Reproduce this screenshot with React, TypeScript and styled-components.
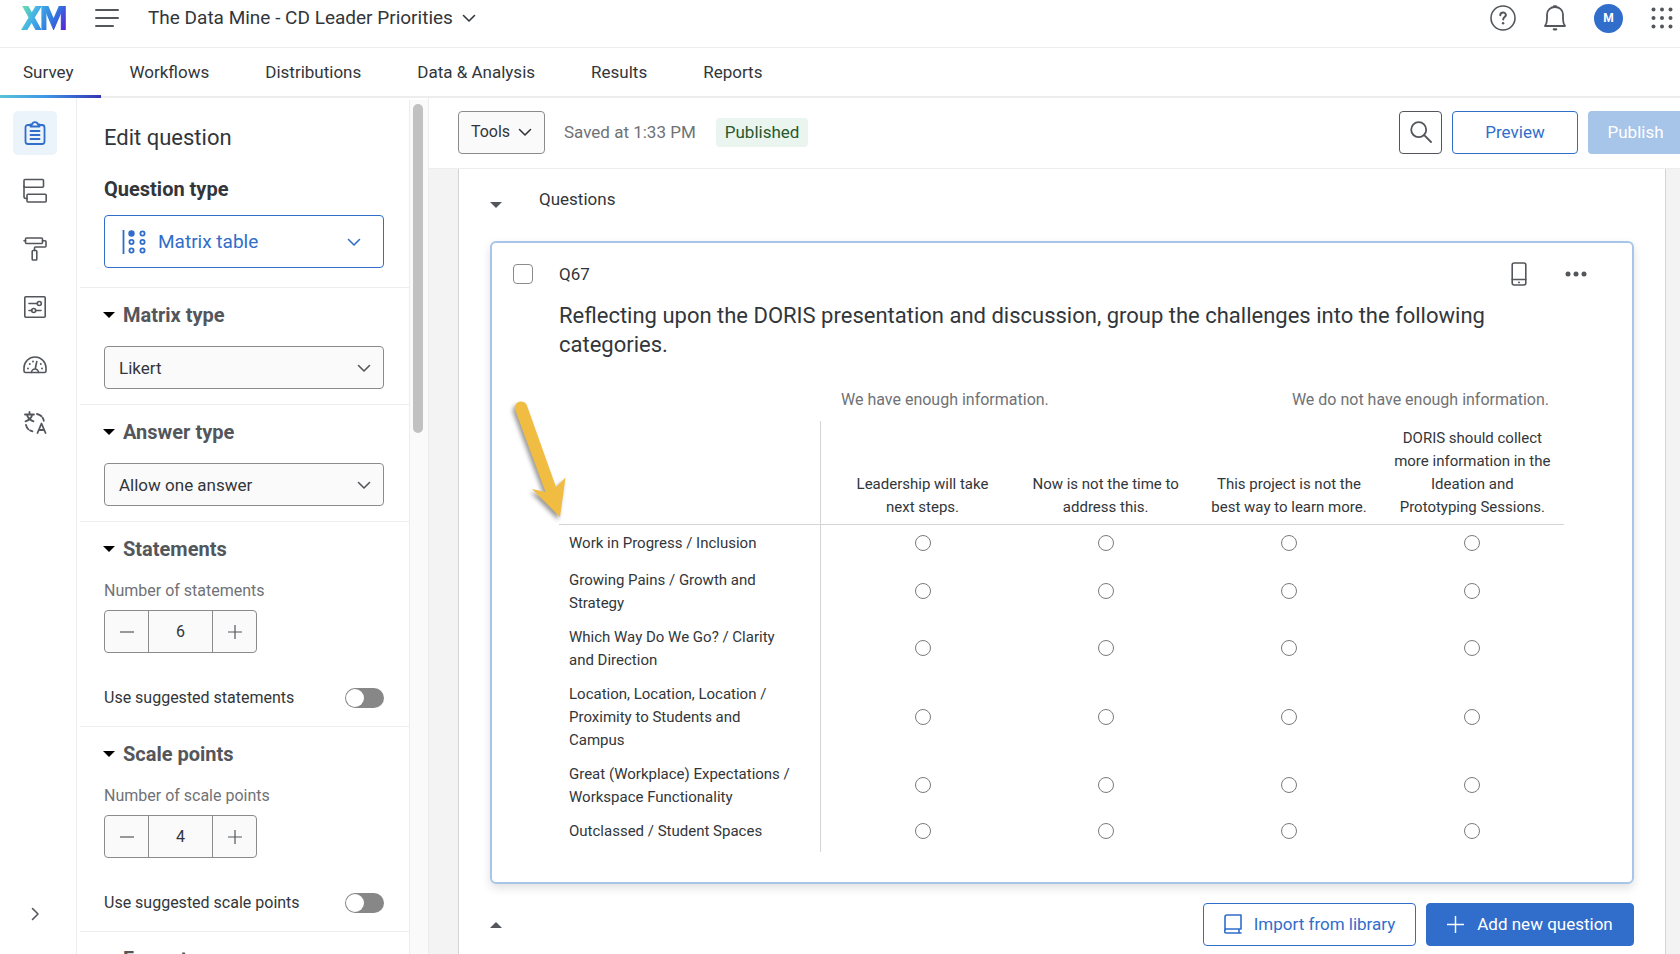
import React, { useId } from "react";
import styled, { createGlobalStyle, css } from "styled-components";

const c = {
  ink: "#32363a",
  icon: "#53565b",
  muted: "#6f7276",
  blue: "#316dca",
  blueSoft: "#a7c4e9",
  line: "#ededee",
  rule: "#d3d4d5",
  field: "#8a8b8c",
};

const GlobalStyle = createGlobalStyle`
  *, *::before, *::after { box-sizing: border-box; }
  html, body, #root { height: 100%; }
  body {
    margin: 0;
    overflow: hidden;
    background: #fff;
    color: ${c.ink};
    font: 16px/24px Roboto, "Liberation Sans", sans-serif;
  }
  button, input, select { font: inherit; color: inherit; }
  svg { display: block; flex: none; }
`;

const Page = styled.div`
  display: flex;
  flex-direction: column;
  height: 100vh;
`;

const TopBar = styled.header`
  display: flex;
  align-items: center;
  flex: none;
  height: 48px;
  padding: 0 7px 11px 21px;
  border-bottom: 1px solid ${c.line};
`;

const PlainButton = styled.button`
  display: flex;
  align-items: center;
  justify-content: center;
  padding: 0;
  border: 0;
  background: none;
  color: ${c.icon};
  cursor: pointer;
`;

const MenuButton = styled(PlainButton)`
  margin: 0 29px 0 28px;
`;

const ProjectButton = styled(PlainButton)`
  gap: 9px;
  font-size: 19px;
  color: ${c.ink};
`;

const TopActions = styled.div`
  display: flex;
  align-items: center;
  gap: 28px;
  margin-left: auto;
`;

const Avatar = styled.button`
  width: 29px;
  height: 29px;
  padding: 0;
  border: 0;
  border-radius: 50%;
  background: ${c.blue};
  color: #fff;
  font-size: 12px;
  font-weight: 700;
`;

const Tabs = styled.nav`
  display: flex;
  flex: none;
  height: 50px;
  border-bottom: 2px solid ${c.line};
`;

const Tab = styled.a<{ $active?: boolean }>`
  display: flex;
  align-items: center;
  height: 50px;
  padding: 0 28px 2px;
  color: ${c.ink};
  font-size: 17px;
  text-decoration: none;
  &:first-child { padding-left: 23px; }
  ${(p) =>
    p.$active &&
    css`
      background: linear-gradient(90deg, #57c3d6, #3f97e6 45%, #3434b4) bottom / 100% 3px no-repeat;
    `}
`;

const Body = styled.div`
  display: flex;
  flex: 1;
  min-height: 0;
`;

const Rail = styled.nav`
  display: flex;
  flex-direction: column;
  align-items: center;
  gap: 14px;
  flex: none;
  width: 77px;
  padding: 13px 6px 18px 0;
  border-right: 1px solid ${c.line};
`;

const RailButton = styled(PlainButton)<{ $active?: boolean }>`
  width: 44px;
  height: 44px;
  border-radius: 5px;
  ${(p) => p.$active && css`background: #ebf3fb; color: ${c.blue};`}
  &:last-child { margin-top: auto; }
`;

const PanelWrap = styled.div`
  display: flex;
  flex: none;
  width: 352px;
  border-right: 1px solid ${c.line};
`;

const Panel = styled.aside`
  flex: 1;
  overflow: hidden;
  padding-left: 3px;
`;

const ScrollTrack = styled.div`
  width: 19px;
  margin-top: 2px;
  padding: 4px 4px 0 3px;
  border-left: 1px solid ${c.line};
  background: #fafafa;
`;

const ScrollThumb = styled.div`
  width: 10px;
  height: 329px;
  border-radius: 5px;
  background: #c1c1c1;
`;

const Section = styled.section`
  padding: 15px 25px 15px 24px;
  border-bottom: 1px solid ${c.line};
`;

const IntroSection = styled(Section)`
  padding: 24px 25px 19px 24px;
`;

const PanelTitle = styled.h1`
  margin: 0;
  font-size: 22px;
  font-weight: 400;
  line-height: 32px;
`;

const FieldTitle = styled.h2`
  margin: 22px 0 13px;
  font-size: 20px;
  font-weight: 700;
  line-height: 26px;
`;

const TypeButton = styled.button`
  display: flex;
  align-items: center;
  gap: 12px;
  width: 100%;
  height: 53px;
  padding: 0 22px 0 17px;
  border: 1px solid ${c.blue};
  border-radius: 4px;
  background: #fff;
  color: ${c.blue};
  font-size: 19px;
  svg:last-child { margin-left: auto; }
`;

const SectionToggle = styled.button`
  display: flex;
  align-items: center;
  gap: 8px;
  padding: 0;
  border: 0;
  background: none;
  color: #53565b;
  font-size: 20px;
  font-weight: 700;
  line-height: 24px;
`;

const SectionHeading = styled.h3`
  margin: 0 0 19px -1px;
`;

const SelectBox = styled.div`
  display: grid;
  align-items: center;
  > * { grid-area: 1 / 1; }
  svg { justify-self: end; margin-right: 13px; pointer-events: none; color: ${c.icon}; }
`;

const Select = styled.select`
  appearance: none;
  width: 100%;
  height: 43px;
  padding: 0 40px 0 14px;
  border: 1px solid ${c.field};
  border-radius: 4px;
  background: #fafafa;
  font-size: 17px;
`;

const FieldLabel = styled.label`
  display: block;
  margin: 0 0 8px;
  color: ${c.muted};
  line-height: 22px;
`;

const Stepper = styled.div`
  display: flex;
  width: 153px;
  height: 43px;
  border: 1px solid ${c.field};
  border-radius: 4px;
  background: #fafafa;
`;

const StepButton = styled(PlainButton)`
  width: 43px;
`;

const StepInput = styled.input`
  flex: 1;
  min-width: 0;
  border: solid ${c.field};
  border-width: 0 1px;
  background: none;
  text-align: center;
`;

const SwitchRow = styled.label`
  display: flex;
  align-items: center;
  justify-content: space-between;
  margin: 33px 0 1px;
`;

const Switch = styled.input`
  appearance: none;
  display: flex;
  width: 39px;
  height: 20px;
  margin: 0;
  padding: 1px;
  border-radius: 10px;
  background: #878787;
  &::before {
    content: "";
    width: 18px;
    height: 18px;
    border-radius: 50%;
    background: #fff;
  }
  &:checked { justify-content: flex-end; background: ${c.blue}; }
`;

const Main = styled.main`
  display: flex;
  flex-direction: column;
  flex: 1;
  min-width: 0;
  overflow: hidden;
  background: #f3f3f4;
`;

const Toolbar = styled.div`
  display: flex;
  align-items: center;
  flex: none;
  height: 71px;
  padding: 13px 0 14px 29px;
  border-bottom: 1px solid ${c.line};
  background: #fff;
`;

const Button = styled.button<{ $kind?: "outline" | "primary" | "disabled" }>`
  display: flex;
  align-items: center;
  justify-content: center;
  height: 43px;
  padding: 0 0 1px;
  border: 1px solid ${c.blue};
  border-radius: 4px;
  background: #fff;
  color: ${c.blue};
  font-size: 17px;
  white-space: nowrap;
  ${(p) => p.$kind === "primary" && css`background: ${c.blue}; color: #fff;`}
  ${(p) => p.$kind === "disabled" && css`border-color: ${c.blueSoft}; background: ${c.blueSoft}; color: #fff;`}
`;

const ToolsButton = styled(Button)`
  gap: 8px;
  width: 87px;
  border-color: ${c.field};
  background: #fafafa;
  color: ${c.ink};
  font-size: 16px;
`;

const Saved = styled.span`
  margin: 0 20px 0 19px;
  padding-bottom: 1px;
  color: ${c.muted};
  font-size: 17px;
`;

const Badge = styled.span`
  padding: 2px 9px 3px;
  border-radius: 4px;
  background: #ebf5f0;
  color: #26592c;
  font-size: 17px;
`;

const ToolbarActions = styled.div`
  display: flex;
  gap: 10px;
  margin-left: auto;
`;

const SearchButton = styled(Button)`
  width: 43px;
  border-color: ${c.icon};
  color: ${c.icon};
`;

const PreviewButton = styled(Button)`
  width: 126px;
`;

const PublishButton = styled(Button)`
  width: 92px;
  padding: 0 17px 1px 19px;
  border-right: 0;
  border-radius: 4px 0 0 4px;
`;

const Sheet = styled.div`
  flex: 1;
  margin: 0 14px 0 29px;
  padding: 0 31px 9px;
  border: solid ${c.rule};
  border-width: 0 1px;
  background: #fff;
`;

const BlockHeader = styled.div`
  display: flex;
  align-items: center;
  gap: 37px;
  padding: 18px 0 30px;
  font-size: 17px;
`;

const BlockToggle = styled(PlainButton)`
  padding-top: 11px;
`;

const Card = styled.article`
  position: relative;
  display: flex;
  gap: 26px;
  padding: 20px 68px 30px 21px;
  border: 2px solid ${c.blueSoft};
  border-radius: 6px;
  box-shadow: 0 4px 10px rgba(0, 0, 0, 0.12);
`;

const Check = styled.input`
  appearance: none;
  flex: none;
  width: 20px;
  height: 20px;
  margin: 1px 0 0;
  border: 1px solid ${c.field};
  border-radius: 4px;
  background: #fff;
`;

const CardBody = styled.div`
  flex: 1;
  min-width: 0;
`;

const CardTop = styled.div`
  display: flex;
  align-items: center;
  justify-content: space-between;
  height: 22px;
  font-size: 17px;
`;

const CardActions = styled.div`
  display: flex;
  gap: 38px;
  margin-right: -23px;
`;

const Prompt = styled.p`
  margin: 16px 0 29px;
  font-size: 22px;
  line-height: 29px;
`;

const Matrix = styled.table`
  width: 100%;
  table-layout: fixed;
  border-collapse: separate;
  border-spacing: 0;
  font-size: 15px;
  line-height: 23px;
  th, td { font-weight: 400; padding: 6px 10px 5px; }
  th:nth-child(2), td:nth-child(2) { padding-left: 20px; }
  tbody tr:first-child > * { padding-bottom: 7px; }
  tbody tr:last-child > * { padding-bottom: 9px; }
`;

const Labels = styled.col`
  width: 262px;
`;

const FirstOption = styled.col`
  width: 193px;
`;

const Corner = styled.td`
  border-right: 1px solid ${c.rule};
  border-bottom: 1px solid ${c.rule};
`;

const GroupCell = styled.th`
  && { padding: 0 15px 10px 27px; }
`;

const GroupLabels = styled.div`
  display: flex;
  justify-content: space-between;
  color: ${c.muted};
  font-size: 16px;
`;

const OptionHead = styled.th`
  border-bottom: 1px solid ${c.rule};
  text-align: center;
  vertical-align: bottom;
`;

const Statement = styled.th`
  && { padding-top: 7px; padding-right: 24px; }
  border-right: 1px solid ${c.rule};
  text-align: left;
  vertical-align: top;
  tbody tr:not(:first-child):not(:last-child) > && { padding-bottom: 4px; }
`;

const OptionCell = styled.td`
  text-align: center;
  vertical-align: middle;
`;

const Radio = styled.input`
  appearance: none;
  display: block;
  width: 16px;
  height: 16px;
  margin: 0 auto;
  border: 1px solid #7a7b7c;
  border-radius: 50%;
  background: #fff;
  &:checked { border-width: 5px; border-color: ${c.blue}; }
`;

const Pointer = styled.svg`
  position: absolute;
  top: 151px;
  left: 16px;
  filter: drop-shadow(-2px 3px 2px rgba(0, 0, 0, 0.4));
  pointer-events: none;
`;

const BlockFooter = styled.div`
  display: flex;
  align-items: center;
  gap: 10px;
  padding-top: 19px;
`;

const CollapseButton = styled(PlainButton)`
  height: 24px;
`;

const ImportButton = styled(Button)`
  gap: 12px;
  width: 213px;
  margin-left: auto;
`;

const AddButton = styled(Button)`
  gap: 13px;
  width: 208px;
`;

const Chevron = ({ size = 14 }: { size?: number }) => (
  <svg width={size} height={size} viewBox="0 0 14 14" fill="none" stroke="currentColor" strokeWidth="1.6" strokeLinecap="round" strokeLinejoin="round">
    <path d="M1.5 4.5 7 10l5.5-5.5" />
  </svg>
);

const Caret = ({ up = false, color = "#000" }: { up?: boolean; color?: string }) => (
  <svg width="12" height="6" viewBox="0 0 12 6" fill={color}>
    <path d={up ? "M0 6 6 0l6 6z" : "M0 0h12L6 6z"} />
  </svg>
);

const Minus = () => (
  <svg width="14" height="14" viewBox="0 0 14 14" stroke="currentColor" strokeWidth="1.2">
    <path d="M0 7h14" />
  </svg>
);

const Plus = ({ size = 14 }: { size?: number }) => (
  <svg width={size} height={size} viewBox="0 0 14 14" stroke="currentColor" strokeWidth="1.2">
    <path d="M0 7h14M7 0v14" />
  </svg>
);

const Logo = () => (
  <svg width="46" height="24" viewBox="0 0 46 24" aria-label="XM" role="img">
    <defs>
      <linearGradient id="xm" x1="0" y1="0" x2="45" y2="24" gradientUnits="userSpaceOnUse">
        <stop offset="0.05" stopColor="#66dcae" />
        <stop offset="0.3" stopColor="#45b4e6" />
        <stop offset="0.65" stopColor="#2f7be0" />
        <stop offset="1" stopColor="#5a1fd6" />
      </linearGradient>
    </defs>
    <g fill="none" stroke="url(#xm)" strokeWidth="5">
      <path d="M3.400-1.500 18.400 25.500M18.600-1.500 2.200 25.500" strokeWidth="5.400" />
      <path d="M22.900 25V-1M42.300 25V-1" />
      <path d="M23-4 32.600 18.500 42.200-4" />
    </g>
  </svg>
);

const stroke = { fill: "none", stroke: "currentColor", strokeWidth: 1.6, strokeLinejoin: "round" as const, strokeLinecap: "round" as const };

const railIcons = [
  {
    name: "Survey builder",
    art: (
      <svg width="24" height="26" viewBox="0 0 24 26" {...stroke} strokeWidth="1.8">
        <path d="M7.500 5H5a2.500 2.500 0 0 0-2.500 2.500v14A2.500 2.500 0 0 0 5 24h14a2.500 2.500 0 0 0 2.500-2.500v-14A2.500 2.500 0 0 0 19 5h-2.500" />
        <path d="M7.500 6.500V4.500H9a3.100 3.100 0 0 1 6 0h1.500v2z" />
        <path d="M7.500 11h9M7.500 15h9M7.500 19h9" />
      </svg>
    ),
  },
  {
    name: "Survey flow",
    art: (
      <svg width="24" height="26" viewBox="0 0 24 26" {...stroke}>
        <rect x="1" y="1.500" width="19.500" height="7.800" rx="1" />
        <rect x="4" y="16.200" width="19.200" height="7.800" rx="1" />
        <path d="M1 8v10.500a2 2 0 0 0 2 2h1" />
      </svg>
    ),
  },
  {
    name: "Look and feel",
    art: (
      <svg width="24" height="26" viewBox="0 0 24 26" {...stroke}>
        <rect x="2.500" y="2" width="17" height="5.500" rx="1" />
        <path d="M2.500 4.700H1M19.500 4.700H22a1 1 0 0 1 1 1V10a1 1 0 0 1-1 1H12.500a1 1 0 0 0-1 1v2.500" />
        <rect x="9.200" y="14.500" width="4.600" height="9.500" rx="0.800" />
      </svg>
    ),
  },
  {
    name: "Survey options",
    art: (
      <svg width="24" height="24" viewBox="0 0 24 24" {...stroke}>
        <rect x="1.800" y="1.800" width="20.400" height="20.400" rx="1" />
        <path d="M6 8.500h8.300M6 15.500h2.700M12.700 15.500H18" />
        <circle cx="16.300" cy="8.500" r="2" />
        <circle cx="10.700" cy="15.500" r="2" />
      </svg>
    ),
  },
  {
    name: "Quotas",
    art: (
      <svg width="24" height="24" viewBox="0 0 24 24" {...stroke}>
        <path d="M2.500 19.500A1.500 1.500 0 0 1 1 18v-3a11 11 0 0 1 22 0v3a1.500 1.500 0 0 1-1.500 1.500z" />
        <path d="M8.500 19.500a3.500 3.500 0 0 1 7 0M12.200 16l1.600-7.500" />
        <path d="M5 15.500v.010M6.800 11v.010M10 8.500v.010M17.800 11v.010M19 15.500v.010" strokeWidth="1.900" />
      </svg>
    ),
  },
  {
    name: "Translations",
    art: (
      <svg width="24" height="24" viewBox="0 0 24 24" {...stroke} strokeWidth="1.800">
        <path d="M2 3.500h9M6.500 1v2.500M4 3.500c.500 3.500 3 5.500 6.500 6.800M9.200 3.500C8.700 7 6 9 2.500 10.300" />
        <path d="M14 3c3.500.600 6 3 6.800 6.800M3 14c.800 3.500 3 5.500 6.500 6.300" strokeDasharray="5 2" />
        <path d="m14.500 22 4-9.500 4 9.500M16 19h5" />
      </svg>
    ),
  },
];

const tabs = ["Survey", "Workflows", "Distributions", "Data & Analysis", "Results", "Reports"];

const options = [
  "Leadership will take next steps.",
  "Now is not the time to address this.",
  "This project is not the best way to learn more.",
  "DORIS should collect more information in the Ideation and Prototyping Sessions.",
];

const statements = [
  "Work in Progress / Inclusion",
  "Growing Pains / Growth and Strategy",
  "Which Way Do We Go? / Clarity and Direction",
  "Location, Location, Location / Proximity to Students and Campus",
  "Great (Workplace) Expectations / Workspace Functionality",
  "Outclassed / Student Spaces",
];

function PanelHeading({ children }: { children: string }) {
  return (
    <SectionHeading>
      <SectionToggle type="button" aria-expanded="true">
        <Caret />
        {children}
      </SectionToggle>
    </SectionHeading>
  );
}

function SelectSection({ title, value }: { title: string; value: string }) {
  return (
    <Section>
      <PanelHeading>{title}</PanelHeading>
      <SelectBox>
        <Select aria-label={title} defaultValue={value}>
          <option>{value}</option>
        </Select>
        <Chevron />
      </SelectBox>
    </Section>
  );
}

function CountSection({ title, noun, value }: { title: string; noun: string; value: number }) {
  const id = useId();
  return (
    <Section>
      <PanelHeading>{title}</PanelHeading>
      <FieldLabel htmlFor={id}>Number of {noun}</FieldLabel>
      <Stepper>
        <StepButton type="button" aria-label={`Fewer ${noun}`}><Minus /></StepButton>
        <StepInput id={id} type="text" inputMode="numeric" defaultValue={value} />
        <StepButton type="button" aria-label={`More ${noun}`}><Plus /></StepButton>
      </Stepper>
      <SwitchRow>
        Use suggested {noun}
        <Switch type="checkbox" role="switch" />
      </SwitchRow>
    </Section>
  );
}

export default function App() {
  return (
    <Page>
      <GlobalStyle />
      <TopBar>
        <Logo />
        <MenuButton type="button" aria-label="Menu">
          <svg width="24" height="20" viewBox="0 0 24 20" {...stroke} strokeWidth="2">
            <path d="M1 2h22M1 10h22M1 18h17" />
          </svg>
        </MenuButton>
        <ProjectButton type="button">
          The Data Mine - CD Leader Priorities
          <Chevron />
        </ProjectButton>
        <TopActions>
          <PlainButton type="button" aria-label="Help">
            <svg width="26" height="26" viewBox="0 0 26 26" {...stroke}>
              <circle cx="13" cy="13" r="12" />
              <path d="M10.300 10.200c0-3.600 5.600-3.400 5.600-.200 0 2-2.700 2.200-2.700 4.400" strokeWidth="2" />
              <path d="M13.100 18.200v.010" strokeWidth="2.400" />
            </svg>
          </PlainButton>
          <PlainButton type="button" aria-label="Notifications">
            <svg width="22" height="26" viewBox="0 0 22 26" {...stroke} strokeWidth="1.800">
              <path d="M1 21h20c-1.500-2-2-4-2-7V9.500C19 5 15.500 2 11 2S3 5 3 9.500V14c0 3-.500 5-2 7z" />
              <path d="M10 1.300h2M9.800 24.300h2.400" strokeWidth="2.200" />
            </svg>
          </PlainButton>
          <Avatar type="button" aria-label="Account">M</Avatar>
          <PlainButton type="button" aria-label="Apps">
            <svg width="22" height="22" viewBox="0 0 22 22" fill="currentColor">
              {[2.5, 11, 19.5].map((y) => [2.5, 11, 19.5].map((x) => <circle key={`${x}-${y}`} cx={x} cy={y} r="2" />))}
            </svg>
          </PlainButton>
        </TopActions>
      </TopBar>

      <Tabs>
        {tabs.map((tab, i) => (
          <Tab key={tab} href="#" $active={i === 0}>{tab}</Tab>
        ))}
      </Tabs>

      <Body>
        <Rail>
          {railIcons.map((icon, i) => (
            <RailButton key={icon.name} type="button" aria-label={icon.name} $active={i === 0}>{icon.art}</RailButton>
          ))}
          <RailButton type="button" aria-label="Expand">
            <svg width="14" height="14" viewBox="0 0 14 14" {...stroke}>
              <path d="m4.500 1.500 5.500 5.500-5.500 5.500" />
            </svg>
          </RailButton>
        </Rail>

        <PanelWrap>
          <Panel>
            <IntroSection>
              <PanelTitle>Edit question</PanelTitle>
              <FieldTitle>Question type</FieldTitle>
              <TypeButton type="button">
                <svg width="24" height="24" viewBox="0 0 24 24" fill="none" stroke="currentColor" strokeWidth="1.800">
                  <path d="M1.500 0v24" />
                  <circle cx="9.500" cy="3.500" r="2.300" fill="currentColor" />
                  <circle cx="9.500" cy="12" r="2.100" />
                  <circle cx="9.500" cy="20.500" r="2.100" />
                  <circle cx="20.500" cy="3.500" r="2.100" />
                  <circle cx="20.500" cy="12" r="2.100" />
                  <circle cx="20.500" cy="20.500" r="2.100" />
                </svg>
                Matrix table
                <Chevron />
              </TypeButton>
            </IntroSection>
            <SelectSection title="Matrix type" value="Likert" />
            <SelectSection title="Answer type" value="Allow one answer" />
            <CountSection title="Statements" noun="statements" value={6} />
            <CountSection title="Scale points" noun="scale points" value={4} />
            <Section>
              <PanelHeading>Format</PanelHeading>
            </Section>
          </Panel>
          <ScrollTrack>
            <ScrollThumb />
          </ScrollTrack>
        </PanelWrap>

        <Main>
          <Toolbar>
            <ToolsButton type="button">Tools<Chevron /></ToolsButton>
            <Saved>Saved at 1:33 PM</Saved>
            <Badge>Published</Badge>
            <ToolbarActions>
              <SearchButton type="button" aria-label="Search">
                <svg width="22" height="22" viewBox="0 0 22 22" {...stroke} strokeWidth="1.800">
                  <circle cx="8.700" cy="8.700" r="7.500" />
                  <path d="m14.200 14.200 6.800 6.800" />
                </svg>
              </SearchButton>
              <PreviewButton type="button">Preview</PreviewButton>
              <PublishButton type="button" $kind="disabled">Publish</PublishButton>
            </ToolbarActions>
          </Toolbar>

          <Sheet>
            <BlockHeader>
              <BlockToggle type="button" aria-label="Collapse block"><Caret color="#53565b" /></BlockToggle>
              Questions
            </BlockHeader>

            <Card>
              <Check type="checkbox" aria-label="Select Q67" />
              <CardBody>
                <CardTop>
                  Q67
                  <CardActions>
                    <PlainButton type="button" aria-label="Mobile preview">
                      <svg width="16" height="24" viewBox="0 0 16 24" {...stroke}>
                        <rect x="1.200" y="1" width="13.600" height="22" rx="2" />
                        <path d="M1.200 17.500h13.600" />
                        <path d="M8 20.400v.010" strokeWidth="1.900" />
                      </svg>
                    </PlainButton>
                    <PlainButton type="button" aria-label="More actions">
                      <svg width="22" height="6" viewBox="0 0 22 6" fill="currentColor">
                        <circle cx="3" cy="3" r="2.500" />
                        <circle cx="11" cy="3" r="2.500" />
                        <circle cx="19" cy="3" r="2.500" />
                      </svg>
                    </PlainButton>
                  </CardActions>
                </CardTop>
                <Prompt>
                  Reflecting upon the DORIS presentation and discussion, group the challenges into the following categories.
                </Prompt>
                <Matrix>
                  <colgroup>
                    <Labels />
                    <FirstOption />
                    <col />
                    <col />
                    <col />
                  </colgroup>
                  <thead>
                    <tr>
                      <td />
                      <GroupCell colSpan={4}>
                        <GroupLabels>
                          <span>We have enough information.</span>
                          <span>We do not have enough information.</span>
                        </GroupLabels>
                      </GroupCell>
                    </tr>
                    <tr>
                      <Corner />
                      {options.map((o) => <OptionHead key={o} scope="col">{o}</OptionHead>)}
                    </tr>
                  </thead>
                  <tbody>
                    {statements.map((s, row) => (
                      <tr key={s}>
                        <Statement scope="row">{s}</Statement>
                        {options.map((o) => (
                          <OptionCell key={o}>
                            <Radio type="radio" name={`statement-${row}`} aria-label={`${s}: ${o}`} />
                          </OptionCell>
                        ))}
                      </tr>
                    ))}
                  </tbody>
                </Matrix>
              </CardBody>
              <Pointer width="64" height="130" viewBox="0 0 64 130" fill="#f0bc42" aria-hidden="true">
                <path d="M7 15.500a6.300 6.300 0 0 1 12.200-3.300L48 93l9.500-9.500L52 123 24 95l13.500 3z" />
              </Pointer>
            </Card>

            <BlockFooter>
              <CollapseButton type="button" aria-label="Collapse block from end"><Caret up color="#53565b" /></CollapseButton>
              <ImportButton type="button">
                <svg width="18" height="20" viewBox="0 0 18 20" {...stroke}>
                  <path d="M1 16.500V3a2 2 0 0 1 2-2h14v14H2.500a1.500 1.500 0 0 0 0 4H17M15 15v4" />
                </svg>
                Import from library
              </ImportButton>
              <AddButton type="button" $kind="primary"><Plus size={17} />Add new question</AddButton>
            </BlockFooter>
          </Sheet>
        </Main>
      </Body>
    </Page>
  );
}
